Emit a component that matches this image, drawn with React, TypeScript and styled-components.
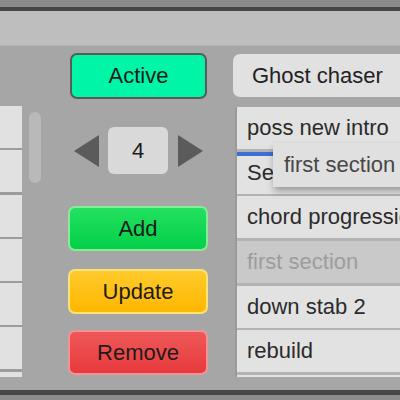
import React from 'react';
import styled, { createGlobalStyle } from 'styled-components';

const GlobalStyle = createGlobalStyle`
  html, body {
    margin: 0;
    padding: 0;
    background: #8b8b8b;
  }
  #root {
    width: 400px;
    height: 400px;
    overflow: hidden;
    font-family: "Liberation Sans", Arial, sans-serif;
  }
`;

const Window = styled.div`
  width: 400px;
  height: 400px;
  display: flex;
  flex-direction: column;
  overflow: hidden;
`;

const TopStrip = styled.div`
  height: 7px;
  background: #8b8b8b;
  flex-shrink: 0;
`;

const DarkBar = styled.div<{ $h: number }>`
  height: ${(p) => p.$h}px;
  background: #464646;
  flex-shrink: 0;
`;

const Header = styled.div`
  height: 34px;
  background: #bebebe;
  border-bottom: 1px solid #b2b2b2;
  flex-shrink: 0;
`;

const Main = styled.div`
  height: 344px;
  background: #a6a6a6;
  display: flex;
  flex-shrink: 0;
  overflow: hidden;
`;

const SideList = styled.div`
  width: 22px;
  height: 271px;
  margin-top: 60px;
  display: flex;
  flex-direction: column;
  gap: 2.3px;
  background: #9c9c9c;
  overflow: hidden;
  flex-shrink: 0;
`;

const SideCell = styled.div`
  height: 42px;
  flex-shrink: 0;
  background: #e1e1e1;
`;

const ScrollThumb = styled.div`
  width: 12px;
  height: 71px;
  margin: 66px 0 0 7px;
  border-radius: 6px;
  background: #b9b9b9;
  flex-shrink: 0;
`;

const Controls = styled.div`
  width: 140px;
  margin-left: 27px;
  padding-top: 7px;
  display: flex;
  flex-direction: column;
  flex-shrink: 0;
`;

const ActiveButton = styled.div`
  height: 46px;
  margin: 0 1px 0 2px;
  box-sizing: border-box;
  border: 2px solid #5a5a5a;
  border-radius: 7px;
  background: #00f5a6;
  color: #1c1c1c;
  font-size: 22px;
  display: flex;
  align-items: center;
  justify-content: center;
`;

const Stepper = styled.div`
  height: 47px;
  margin-top: 28px;
  display: flex;
  align-items: center;
  justify-content: center;
  gap: 9.5px;
`;

const NumberBox = styled.div`
  width: 60px;
  height: 47px;
  border-radius: 6px;
  background: #d9d9d9;
  color: #1c1c1c;
  font-size: 22px;
  display: flex;
  align-items: center;
  justify-content: center;
`;

const palettes = {
  add: { top: '#22e160', bottom: '#04cf48', border: '#86ec96' },
  update: { top: '#ffca2c', bottom: '#ffb700', border: '#f6e478' },
  remove: { top: '#ef5858', bottom: '#e73a3d', border: '#f39396' },
};

type Kind = keyof typeof palettes;

const ActionButton = styled.div<{ $kind: Kind; $gap: number }>`
  height: 45px;
  margin-top: ${(p) => p.$gap}px;
  box-sizing: border-box;
  border: 2px solid ${(p) => palettes[p.$kind].border};
  border-radius: 7px;
  background: linear-gradient(${(p) => palettes[p.$kind].top}, ${(p) => palettes[p.$kind].bottom});
  color: #1c1c1c;
  font-size: 22px;
  display: flex;
  align-items: center;
  justify-content: center;
`;

const RightColumn = styled.div`
  width: 200px;
  margin-left: 25px;
  padding-top: 8px;
  display: flex;
  flex-direction: column;
  flex-shrink: 0;
`;

const TitleBox = styled.div`
  height: 43px;
  border-radius: 7px 0 0 7px;
  background: #e1e1e1;
  color: #222;
  font-size: 22px;
  padding-left: 19px;
  display: flex;
  align-items: center;
  white-space: nowrap;
`;

const ListPanel = styled.div`
  position: relative;
  height: 270px;
  margin: 10px 0 0 2px;
  border-left: 2px solid #9a9a9a;
  background: #b3b3b3;
  display: flex;
  flex-direction: column;
  gap: 2.7px;
  overflow: hidden;
`;

const ListRow = styled.div<{ $ghost?: boolean }>`
  height: 42px;
  flex-shrink: 0;
  padding-left: 10px;
  background: ${(p) => (p.$ghost ? '#c9c9c9' : '#e2e2e2')};
  color: ${(p) => (p.$ghost ? '#9d9d9d' : '#2b2b2b')};
  font-size: 22px;
  display: flex;
  align-items: center;
  white-space: nowrap;
  overflow: hidden;
`;

const DropLine = styled.div`
  position: absolute;
  left: 0;
  right: 0;
  top: 45px;
  height: 4px;
  background: #3c6fd4;
`;

const DragGhost = styled.div`
  position: absolute;
  left: 36px;
  top: 36px;
  width: 200px;
  height: 44px;
  padding-left: 11px;
  box-sizing: border-box;
  background: #e0e0e0;
  color: #474747;
  font-size: 22px;
  display: flex;
  align-items: center;
  white-space: nowrap;
  box-shadow: 1px 4px 7px rgba(0, 0, 0, 0.32);
`;

function Arrow({ dir }: { dir: 'left' | 'right' }) {
  return (
    <svg width="25" height="32" viewBox="0 0 25 32">
      <polygon points={dir === 'left' ? '25,0 25,32 0,16' : '0,0 0,32 25,16'} fill="#5b5b5b" />
    </svg>
  );
}

const rows = ['poss new intro', 'Se', 'chord progression', 'first section', 'down stab 2', 'rebuild', ''];

export default function App() {
  return (
    <Window>
      <GlobalStyle />
      <TopStrip />
      <DarkBar $h={4} />
      <Header />
      <Main>
        <SideList>
          {Array.from({ length: 7 }).map((_, i) => (
            <SideCell key={i} />
          ))}
        </SideList>
        <ScrollThumb />
        <Controls>
          <ActiveButton>Active</ActiveButton>
          <Stepper>
            <Arrow dir="left" />
            <NumberBox>4</NumberBox>
            <Arrow dir="right" />
          </Stepper>
          <ActionButton $kind="add" $gap={32}>Add</ActionButton>
          <ActionButton $kind="update" $gap={18}>Update</ActionButton>
          <ActionButton $kind="remove" $gap={16}>Remove</ActionButton>
        </Controls>
        <RightColumn>
          <TitleBox>Ghost chaser</TitleBox>
          <ListPanel>
            {rows.map((r, i) => (
              <ListRow key={i} $ghost={i === 3}>
                {r}
              </ListRow>
            ))}
            <DropLine />
            <DragGhost>first section</DragGhost>
          </ListPanel>
        </RightColumn>
      </Main>
      <DarkBar $h={5} />
      <TopStrip />
    </Window>
  );
}
